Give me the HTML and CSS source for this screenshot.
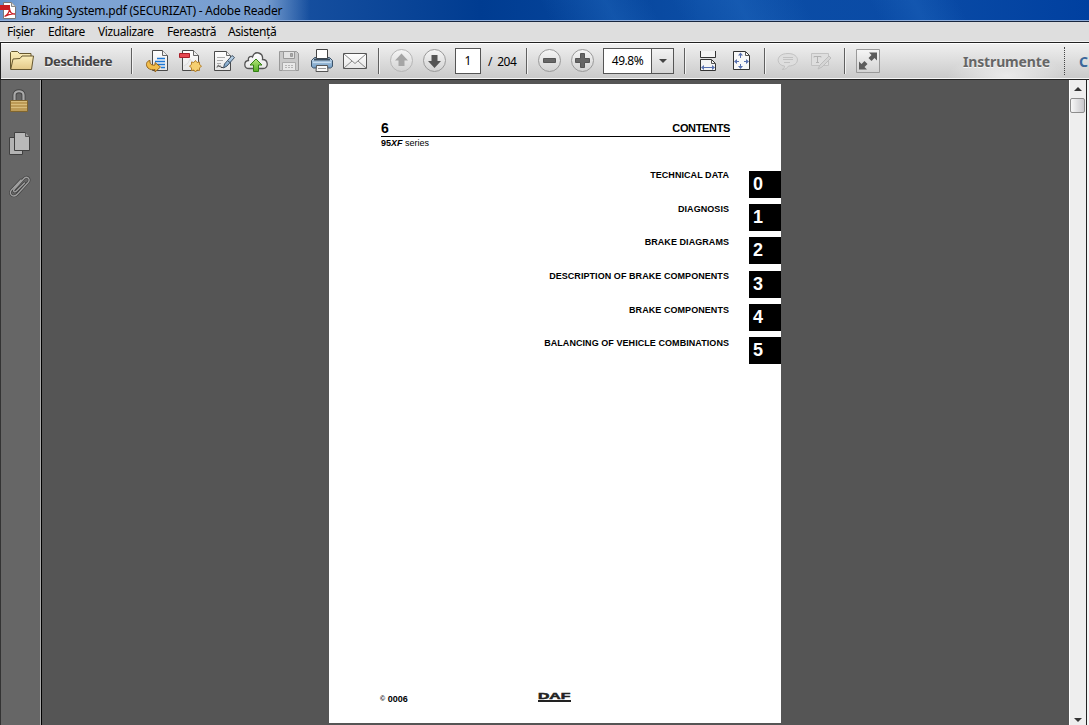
FILE: index.html
```
<!DOCTYPE html>
<html lang="ro">
<head>
    <meta charset="UTF-8">
    <title>Braking System.pdf (SECURIZAT) - Adobe Reader</title>
    <link rel="stylesheet" href="styles.css">
</head>
<body>
    <svg class="defs" width="0" height="0">
        <defs>
            <linearGradient id="paper" x1="0" y1="0" x2="0" y2="1"><stop offset="0" stop-color="#fff"/><stop offset="1" stop-color="#e6e6e6"/></linearGradient>
            <linearGradient id="gold" x1="0" y1="0" x2="0" y2="1"><stop offset="0" stop-color="#fbeebb"/><stop offset="1" stop-color="#e3c888"/></linearGradient>
            <linearGradient id="round" x1="0" y1="0" x2="0" y2="1"><stop offset="0" stop-color="#f6f6f6"/><stop offset="1" stop-color="#d2d2d2"/></linearGradient>
            <linearGradient id="green" x1="0" y1="0" x2="0" y2="1"><stop offset="0" stop-color="#b5e77a"/><stop offset="1" stop-color="#55ad24"/></linearGradient>
            <linearGradient id="steel" x1="0" y1="0" x2="0" y2="1"><stop offset="0" stop-color="#c5d9ea"/><stop offset="1" stop-color="#6f9bc4"/></linearGradient>
        </defs>
    </svg>

    <header class="titlebar">
        <svg class="app-icon" width="17" height="17" viewBox="0 0 17 17">
            <path d="M3.500 .5h8l4 4v12h-12z" fill="#fff" stroke="#777"/>
            <path d="M11.500 .5v4h4" fill="#ddd" stroke="#888"/>
            <path d="M0 3h10v5H0z" fill="#c81e24"/>
            <path d="M4.500 14.500c3-1.500 5-5 5-8.500 0 4 2 6.500 5.500 6-3-.6-7 .4-10.500 2.500z" fill="none" stroke="#c81e24" stroke-width="1.300"/>
        </svg>
        <span class="title">Braking System.pdf (SECURIZAT) - Adobe Reader</span>
    </header>

    <nav class="menubar">
        <span class="menu-file">Fişier</span>
        <span class="menu-edit">Editare</span>
        <span class="menu-view">Vizualizare</span>
        <span class="menu-window">Fereastră</span>
        <span class="menu-help">Asistenţă</span>
    </nav>

    <div class="toolbar">
        <div class="open">
            <svg class="icon" viewBox="0 0 24 24">
                <path d="M.5 20V3.500l1-1h6l2 2h11.500v3" fill="url(#gold)" stroke="#66572f"/>
                <path d="M.7 20.500 3 10l7-.5 2-2.500h11.500L21.500 20.500z" fill="url(#gold)" stroke="#66572f" stroke-linejoin="round"/>
            </svg>
            <span class="open-label">Deschidere</span>
        </div>
        <i class="sep"></i>

        <div class="group files">
            <svg class="icon" viewBox="0 0 24 24">
                <path d="M7.500 1.500h10l5 5v15h-15z" fill="url(#paper)" stroke="#4a4a4a"/>
                <path d="M17.500 1.500v5h5" fill="#eee" stroke="#666"/>
                <path d="M12 9.500h8M10 12.500h10M12 15.500h8M16 18.500h4" stroke="#1d78d6" stroke-width="1.400"/>
                <path d="M5 11.500C1 12 .5 16.500 3 19c2 1.800 4.500 2 7 1.500V23l5.500-5-5.500-4.500V16c-3 .5-5.500-.5-5-4.500z" fill="#f1bd4b" stroke="#95651d"/>
            </svg>
            <svg class="icon" viewBox="0 0 24 24">
                <path d="M4.500 1.500h11l5 5v15h-16z" fill="url(#paper)" stroke="#4a4a4a"/>
                <path d="M15.500 1.500v5h5" fill="#eee" stroke="#666"/>
                <path d="M6 17q5-2 6-7 1 4 6 4" fill="none" stroke="#ddd"/>
                <path d="M1.500 4.500h10v4h-10z" fill="#e74850" stroke="#a91e29"/>
                <path d="m17.500 11.500 1.500 2 2.500-.5v2.500l2 1.500-2 2v2.500l-2.500-.5-1.500 2-1.700-2-2.300.5V19l-2-2 2-1.500V13l2.300.5z" fill="#f5cf70" stroke="#b5812d"/>
            </svg>
            <svg class="icon" viewBox="0 0 24 24">
                <path d="M3.500 2.500h12l4 4v15h-16z" fill="url(#paper)" stroke="#4a4a4a"/>
                <path d="M15.500 2.500v4h4" fill="#eee" stroke="#666"/>
                <path d="M6 8.500h8M6 11.500h6M6 14.500h4" stroke="#aaa"/>
                <path d="M6 18.500c1-3 2-3 2-.5 1-2 2-1 2 .5h2" fill="none" stroke="#444"/>
                <path d="m12.500 19 1-4L21 6.500l2.500 2L16 17z" fill="url(#steel)" stroke="#405468"/>
                <path d="m17 12 2.500 2" stroke="#405468"/>
            </svg>
            <svg class="icon" viewBox="0 0 24 24">
                <path d="M5 19.500C-.5 19.500-.5 12 4.500 11.500 3.500 8 7 6.500 8.500 8c2-7 11-4.500 10 2.500 6 0 6.500 9 .5 9z" fill="url(#paper)" stroke="#555" stroke-width="1.300"/>
                <path d="m12 10 6 6h-3.500v6.500h-5V16H6z" fill="url(#green)" stroke="#348215"/>
            </svg>
            <svg class="icon" viewBox="0 0 24 24">
                <path d="M2.500 2.500h17l2 2v17h-19z" fill="#c9c9c9" stroke="#989898"/>
                <path d="M6.500 2.500h11v7h-11z" fill="#e2e2e2" stroke="#989898"/>
                <path d="M13.500 4.500h2v3h-2z" fill="#aaa" stroke="#999"/>
                <path d="M5.500 13.500h13v8h-13z" fill="#e8e8e8" stroke="#aaa"/>
                <path d="M8 16.500h8M8 18.500h8" stroke="#b5b5b5" stroke-dasharray="2 1"/>
            </svg>
            <svg class="icon" viewBox="0 0 24 24">
                <path d="M4.500 8.500h15l3 3v6l-2 1.500h-17l-2-1.500v-6z" fill="url(#steel)" stroke="#3c5268"/>
                <path d="M6.500.5h11v9h-11z" fill="#fff" stroke="#444"/>
                <path d="M4 10.500h16" stroke="#36495b" stroke-width="2"/>
                <path d="M3 13.500h18" stroke="#c8ddef"/>
                <path d="M6.500 16.500h11l.5 6H6z" fill="#f7f7f7" stroke="#555"/>
                <path d="M8 19.500h8" stroke="#999"/>
            </svg>
            <svg class="icon" viewBox="0 0 24 24">
                <path d="M.5 4.500h23v15H.5z" fill="url(#paper)" stroke="#555"/>
                <path d="m1 5 11 9.500L23 5M1 19l8-7m14 7-8-7" fill="none" stroke="#888"/>
            </svg>
        </div>
        <i class="sep"></i>

        <div class="group pages">
            <svg class="icon" viewBox="0 0 24 24">
                <circle cx="11.500" cy="11.500" r="11" fill="url(#round)" stroke="#b5b5b5"/>
                <path d="m11.500 4.500 6.500 7h-3.500V17h-6v-5.500H5z" fill="#a5a5a5"/>
            </svg>
            <svg class="icon" viewBox="0 0 24 24">
                <circle cx="11.500" cy="11.500" r="11" fill="url(#round)" stroke="#999"/>
                <path d="m11.500 19 6.500-7h-3.500V6h-6v6H5z" fill="#555"/>
            </svg>
        </div>
        <span class="page-input">1</span>
        <span class="page-count">/&nbsp; 204</span>
        <i class="sep"></i>

        <div class="group zoom">
            <svg class="icon" viewBox="0 0 24 24">
                <circle cx="11.500" cy="11.500" r="11" fill="url(#round)" stroke="#999"/>
                <path d="M5.500 9.500h12v4h-12z" fill="#666" stroke="#555"/>
            </svg>
            <svg class="icon" viewBox="0 0 24 24">
                <circle cx="11.500" cy="11.500" r="11" fill="url(#round)" stroke="#999"/>
                <path d="M9.500 4.500h4v5h5v4h-5v5h-4v-5h-5v-4h5z" fill="#666" stroke="#555"/>
            </svg>
        </div>
        <div class="zoom-select">
            <span class="zoom-value">49.8%</span>
            <span class="zoom-arrow"></span>
        </div>
        <i class="sep"></i>

        <div class="group fit">
            <svg class="icon" viewBox="0 0 24 24">
                <path d="M3.500 2v6.500h15V2" fill="#f4f4f4" stroke="#333"/>
                <path d="M3.500 21.500v-11h11l4 4v7z" fill="#f4f4f4" stroke="#333"/>
                <path d="M14.500 10.500v4h4" fill="none" stroke="#555"/>
                <path d="M5 18.500h12" stroke="#5871b0"/>
                <path d="m4 18.500 3-2.500v5zm14 0-3-2.500v5z" fill="#5871b0"/>
            </svg>
            <svg class="icon" viewBox="0 0 24 24">
                <path d="M3.500 2.500h12l4 4v14h-16z" fill="#f8f8f8" stroke="#333"/>
                <path d="M15.500 2.500v4h4" fill="none" stroke="#555"/>
                <path d="M5 12.500h4m5 0h4M10.500 5v4m0 6v4" stroke="#5871b0"/>
                <path d="m4 12.500 3-2.500v5zm15 0-3-2.500v5zM10.500 3.500 8 6.500h5zm0 16.500L8 17h5z" fill="#5871b0"/>
            </svg>
        </div>
        <i class="sep"></i>

        <div class="group comments">
            <svg class="icon" viewBox="0 0 24 24">
                <path d="M12 4.500c-13 0-12 12-3.500 12.500.2 2-1 3-2.500 3.500 3.500 0 5.500-1.500 6.500-3.500 12 0 12-12.500-.5-12.500z" fill="#dedede" stroke="#c2c2c2"/>
                <path d="M7 8.500h10M7 10.500h10M8 13.500h6" stroke="#c2c2c2"/>
            </svg>
            <svg class="icon" viewBox="0 0 24 24">
                <path d="M2.500 4.500h17v12h-17z" fill="#dedede" stroke="#c2c2c2"/>
                <path d="M5 8.500v-1h7v1M8.500 7.500v6M7 13.500h3" fill="none" stroke="#b2b2b2"/>
                <path d="m9 20 2-4 9-9 2 2-9 9z" fill="#d5d5d5" stroke="#bdbdbd"/>
            </svg>
        </div>
        <i class="sep"></i>

        <div class="group">
            <svg class="icon" viewBox="0 0 24 24">
                <path d="M.5.5h23v23H.5z" fill="url(#round)" stroke="#999"/>
                <path d="M13 3.500h8v8l-2.500-2.500-3 3-3-3 3-3zM3 12.500 5.500 15l3-3 3 3-3 3 2.500 2.500H3z" fill="#5c5c5c"/>
            </svg>
        </div>

        <div class="panes">
            <span class="tools">Instrumente</span>
            <i class="dots"></i>
            <span class="comment-tab">C</span>
        </div>
    </div>

    <main class="workspace">
        <aside class="sidebar">
            <svg width="20" height="24" viewBox="0 0 20 24">
                <path d="M5.500 12V6c0-5 9-5 9 0v6" fill="none" stroke="#444" stroke-width="4"/>
                <path d="M5.500 12V6c0-5 9-5 9 0v6" fill="none" stroke="#aaa" stroke-width="2.200"/>
                <path d="M1.500 11.500h17v11h-17z" fill="#bd9b56" stroke="#80652f"/>
                <path d="M2 12.500h16M2 15.500h16M2 18.500h16" stroke="#d8bd7c"/>
            </svg>
            <svg width="22" height="24" viewBox="0 0 22 24">
                <path d="M.5 5.500h13v17H.5z" fill="#b3b3b3" stroke="#404040"/>
                <path d="M5.500.500h11l4 4v14h-15z" fill="#b9b9b9" stroke="#404040"/>
                <path d="M16.500.500v4h4" fill="#999" stroke="#555"/>
            </svg>
            <svg width="22" height="24" viewBox="0 0 22 24">
                <g fill="none" stroke-linecap="round">
                    <path d="M15.500 8 7.500 16c-2 2-4 0-2-2L15 3.500c3-3 7 .5 4 4L8.500 19c-4 4.500-9.500 0-6-4L12 5" stroke="#3e3e3e" stroke-width="2.600"/>
                    <path d="M15.500 8 7.500 16c-2 2-4 0-2-2L15 3.500c3-3 7 .5 4 4L8.500 19c-4 4.500-9.500 0-6-4L12 5" stroke="#a0a0a0" stroke-width="1.300"/>
                </g>
            </svg>
        </aside>

        <section class="viewer">
            <article class="page">
                <div class="page-head">
                    <span class="number">6</span>
                    <span class="heading">CONTENTS</span>
                </div>
                <p class="series"><b>95<em>XF</em></b> series</p>

                <div class="contents">
                    <ul class="chapters">
                        <li>TECHNICAL DATA</li>
                        <li>DIAGNOSIS</li>
                        <li>BRAKE DIAGRAMS</li>
                        <li>DESCRIPTION OF BRAKE COMPONENTS</li>
                        <li>BRAKE COMPONENTS</li>
                        <li>BALANCING OF VEHICLE COMBINATIONS</li>
                    </ul>
                    <ul class="tabs">
                        <li>0</li>
                        <li>1</li>
                        <li>2</li>
                        <li>3</li>
                        <li>4</li>
                        <li>5</li>
                    </ul>
                </div>

                <footer class="page-foot">
                    <span class="copyright"><small>©</small> 0006</span>
                    <span class="daf"><span>DAF</span></span>
                </footer>
            </article>
        </section>

        <div class="scrollbar">
            <i class="arrow-up"></i>
            <i class="thumb"></i>
            <i class="arrow-down"></i>
        </div>
    </main>
</body>
</html>
```
FILE: styles.css
```
* {
    box-sizing: border-box;
    margin: 0;
    padding: 0;
}

body {
    width: 1089px;
    height: 725px;
    overflow: hidden;
    display: flex;
    flex-direction: column;
    font-family: "Noto Sans", "Open Sans", sans-serif;
    font-size: 12px;
    color: #000;
    background: #555;
}

svg {
    display: block;
    flex: none;
}

.defs {
    position: absolute;
}

/* title bar */
.titlebar {
    height: 22px;
    flex: none;
    display: flex;
    align-items: center;
    background:
        linear-gradient(90deg, rgba(150, 182, 222, 0.4) 0, rgba(150, 182, 222, 0.75) 30px 265px, transparent 310px),
        linear-gradient(62deg, transparent 0 50%, rgba(45, 120, 205, 0.3) 56%, transparent 60% 62%, rgba(45, 120, 205, 0.3) 68%, transparent 74% 80%, rgba(45, 120, 205, 0.25) 84%, transparent 88%),
        linear-gradient(90deg, #4379bd 0, #164f9f 300px, #003c91 480px, #0b4da5 700px, #0a4ba6 920px, #0040a0 1089px);
    border-bottom: 1px solid #18263f;
    box-shadow: inset 0 -1px #8faedb;
}

.title {
    margin-left: 4px;
    line-height: 20px;
    letter-spacing: -0.22px;
    white-space: nowrap;
}

/* menu */
.menubar {
    height: 20px;
    flex: none;
    display: flex;
    padding-left: 7px;
    line-height: 19px;
    background: #dedede;
    border-bottom: 1px solid #f4f4f4;
}

.menubar span {
    letter-spacing: -0.4px;
    white-space: nowrap;
}

.menu-file { width: 41px; }
.menu-edit { width: 50px; }
.menu-view { width: 69px; }
.menu-window { width: 61px; }

/* toolbar */
.toolbar {
    height: 38px;
    flex: none;
    display: flex;
    align-items: center;
    padding-left: 9px;
    border: solid #222;
    border-width: 1px 0 1px 1px;
    background: linear-gradient(#f0f0f0, #c9c9c9);
    box-shadow: inset 0 1px #fff, inset 0 -1px #f5f5f5;
}

.icon {
    width: 24px;
    height: 24px;
}

.open {
    display: flex;
    align-items: center;
    width: 121px;
}

.open-label {
    margin-left: 10px;
    font-size: 13px;
    font-weight: bold;
    letter-spacing: -0.4px;
    color: #444;
    text-shadow: 0 1px #f6f6f6;
}

.sep {
    width: 2px;
    height: 26px;
    flex: none;
    background: #606060;
    border-right: 1px solid #f2f2f2;
}

.group {
    display: flex;
    gap: 9px;
    margin: 0 10px;
}

.files {
    margin: 0 11px 0 12px;
}

.pages {
    margin-right: 8px;
}

.page-input {
    width: 26px;
    height: 26px;
    border: 1px solid #555;
    background: #fff;
    line-height: 24px;
    text-align: center;
}

.page-count {
    width: 38px;
    margin-left: 7px;
    letter-spacing: -0.5px;
    white-space: nowrap;
}

.zoom {
    margin-right: 8px;
}

.zoom-select {
    display: flex;
    width: 71px;
    height: 26px;
    margin-right: 10px;
    border: 1px solid #555;
    background: #fff;
}

.zoom-value {
    width: 48px;
    border-right: 1px solid #555;
    line-height: 24px;
    text-align: center;
    letter-spacing: -0.5px;
}

.zoom-arrow {
    flex: 1;
    background: linear-gradient(#f3f3f3, #d5d5d5);
    display: flex;
    align-items: center;
    justify-content: center;
}

.zoom-arrow::before {
    content: "";
    border: 4px solid transparent;
    border-top-color: #444;
    border-bottom: 0;
}

.fit {
    margin-left: 11px;
}

.comments {
    margin-right: 11px;
}

.panes {
    width: 199px;
    height: 34px;
    flex: none;
    display: flex;
    align-items: center;
    padding-left: 73px;
    background: radial-gradient(ellipse 60px 22px at 117px 32px, rgba(245, 245, 245, 0.75), transparent);
    font-size: 14px;
    font-weight: bold;
}

.tools {
    width: 101px;
    flex: none;
    color: #666;
    letter-spacing: -0.15px;
    text-shadow: 0 1px #f6f6f6;
}

.dots {
    height: 28px;
    flex: none;
    border-left: 1px dotted #444;
}

.comment-tab {
    margin-left: 14px;
    color: #3b689b;
}

/* document area */
.workspace {
    flex: 1;
    min-height: 0;
    display: flex;
}

.sidebar {
    width: 42px;
    display: flex;
    flex-direction: column;
    gap: 19px;
    padding: 9px 0 0 8px;
    background: #666;
    border-left: 1px solid #333;
    border-right: 1px solid #000;
    box-shadow: inset -1px 0 #aaa;
}

.viewer {
    flex: 1;
    background: #555;
    padding: 4px 0 0 287px;
}

.page {
    width: 452px;
    height: 639px;
    display: flex;
    flex-direction: column;
    background: #fff;
    font-family: "Liberation Sans", Arial, sans-serif;
}

.page-head {
    display: flex;
    justify-content: space-between;
    align-items: flex-end;
    width: 349px;
    height: 53px;
    margin-left: 52px;
    border-bottom: 1px solid #000;
    font-weight: bold;
}

.number {
    font-size: 14px;
    line-height: 16px;
}

.heading {
    font-size: 11px;
    line-height: 15px;
    letter-spacing: -0.35px;
}

.series {
    margin-left: 52px;
    font-size: 9px;
    line-height: 13px;
}

.contents {
    display: flex;
    justify-content: flex-end;
    margin-top: 21px;
    font-weight: bold;
}

.contents ul {
    list-style: none;
}

.chapters {
    margin-right: 20px;
    font-size: 9px;
    line-height: 9px;
    letter-spacing: 0.06px;
    text-align: right;
    white-space: nowrap;
}

.chapters li {
    height: 33.7px;
}

.tabs li {
    width: 32px;
    height: 27px;
    margin-bottom: 6.2px;
    padding-left: 4px;
    background: #000;
    color: #fff;
    font-size: 18px;
    line-height: 27px;
}

.page-foot {
    display: flex;
    margin: auto 0 18px 51px;
    font-size: 9px;
    font-weight: bold;
    line-height: 11px;
}

.copyright {
    width: 158px;
}

.copyright small {
    font-size: 7px;
    vertical-align: 1px;
}

.daf {
    width: 33px;
    height: 10px;
    margin-top: -1px;
    border-bottom: 2px solid #222;
}

.daf span {
    display: block;
    font-size: 9px;
    line-height: 8px;
    color: #222;
    -webkit-text-stroke: 0.5px #222;
    transform: scaleX(1.75);
    transform-origin: left;
}

.scrollbar {
    width: 20px;
    flex: none;
    display: flex;
    flex-direction: column;
    align-items: center;
    padding-right: 3px;
    background: linear-gradient(90deg, #fff 1px, #eee 1px 17px, #222 17px 18px, #f5f5f5 18px);
}

.arrow-up {
    margin-top: 7px;
    border: 4px solid transparent;
    border-top: 0;
    border-bottom-color: #333;
}

.thumb {
    width: 15px;
    height: 15px;
    margin-top: 7px;
    border: 1px solid #8c8c8c;
    border-radius: 2px;
    background: linear-gradient(90deg, #f7f7f7, #c8c8cc);
}

.arrow-down {
    margin: auto 0 3px;
    border: 4px solid transparent;
    border-bottom: 0;
    border-top-color: #333;
}
```
